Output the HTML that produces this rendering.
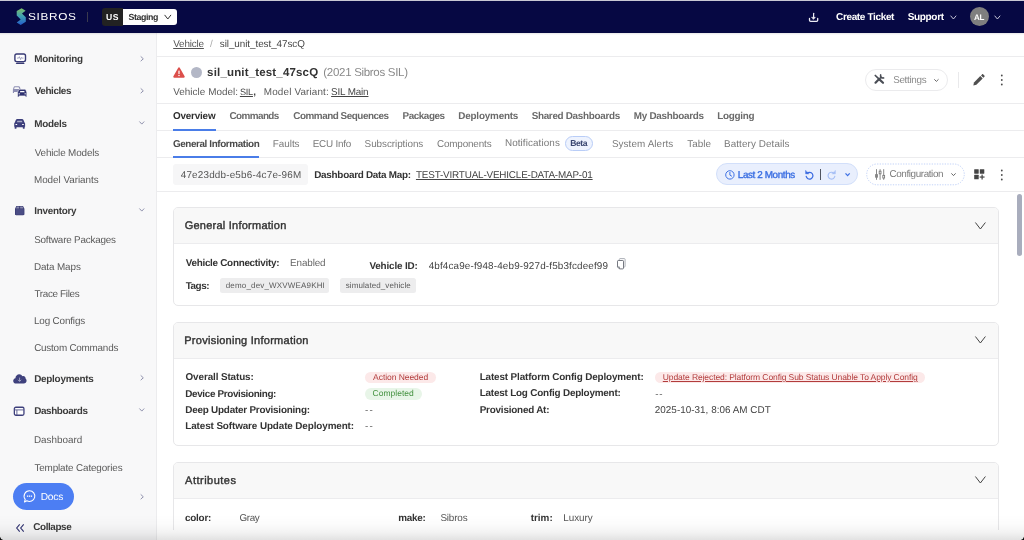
<!DOCTYPE html>
<html lang="en">
<head>
<meta charset="utf-8">
<title>Sibros - Vehicle sil_unit_test_47scQ</title>
<style>
html,body{margin:0;padding:0;}
body{width:1024px;height:540px;overflow:hidden;position:relative;background:#fff;font-family:"Liberation Sans",sans-serif;}
.a{position:absolute;}
.t{position:absolute;white-space:nowrap;line-height:1;text-rendering:geometricPrecision;}
.hl{position:absolute;height:1px;background:#ececee;left:157px;width:867px;}
.card{position:absolute;left:173px;width:824px;border:1px solid #e7e7e9;border-radius:5px;background:#fff;overflow:hidden;box-sizing:content-box;}
.card .hd{position:absolute;left:0;top:0;right:0;height:35px;background:#f8f8f8;border-bottom:1px solid #ececee;}
svg{position:absolute;overflow:visible;}
</style>
</head>
<body>
<!-- top bar -->
<div class="a" style="left:0;top:0;width:1024px;height:1px;background:#c8c8d4;"></div>
<div class="a" style="left:0;top:1px;width:1024px;height:32px;background:#060843;"></div>
<!-- sidebar -->
<div class="a" style="left:0;top:33px;width:156px;height:507px;background:#f8f8f9;border-right:1px solid #ececee;"></div>
<div class="a" style="left:0;top:33px;width:1024px;height:2px;background:linear-gradient(to bottom,rgba(0,0,20,0.10),rgba(0,0,0,0));"></div>
<!-- horizontal rules -->
<div class="hl" style="top:56px;"></div>
<div class="hl" style="top:103px;"></div>
<div class="hl" style="top:130px;"></div>
<div class="hl" style="top:157px;"></div>
<div class="hl" style="top:190.5px;"></div>
<!-- env switch -->
<div class="a" style="left:101.5px;top:8px;width:21.5px;height:17.8px;background:#222222;border-radius:3px 0 0 3px;"></div>
<div class="a" style="left:122.8px;top:8.7px;width:54.4px;height:16.3px;background:#fdfdfd;border-radius:0 3px 3px 0;"></div>
<div class="a" style="left:87px;top:11.5px;width:1px;height:10.5px;background:#3a3a4e;"></div>
<!-- avatar -->
<div class="a" style="left:969.6px;top:7.1px;width:19.3px;height:19.3px;border-radius:50%;background:#7f7f7f;"></div>
<!-- docs button -->
<div class="a" style="left:12.8px;top:482.9px;width:61.1px;height:27.5px;border-radius:14px;background:#4c7ef3;z-index:5;"></div>
<!-- header: status dot, settings pill, divider -->
<div class="a" style="left:190.7px;top:67.1px;width:10.9px;height:10.9px;border-radius:50%;background:#b3b7c6;"></div>
<div class="a" style="left:864.5px;top:69.2px;width:81.5px;height:20.3px;border:1px solid #ebebed;border-radius:11px;background:#fff;box-sizing:content-box;"></div>
<div class="a" style="left:958px;top:71.8px;width:1px;height:16px;background:#e9e9eb;"></div>
<!-- tab underlines -->
<div class="a" style="left:173.2px;top:128.6px;width:42.5px;height:2px;background:#4a7de8;"></div>
<div class="a" style="left:173.2px;top:155.8px;width:86.2px;height:2px;background:#4a7de8;"></div>
<!-- beta badge -->
<div class="a" style="left:565.2px;top:136.3px;width:25.8px;height:12.5px;border:1px solid #b9cdf7;border-radius:8px;background:#eef3fe;box-sizing:content-box;"></div>
<!-- toolbar: id box, time pill, config pill -->
<div class="a" style="left:172.9px;top:163.8px;width:135.5px;height:21.2px;border-radius:3px;background:#f6f6f7;"></div>
<div class="a" style="left:716px;top:163.3px;width:139.8px;height:19.9px;border:1px solid #d2dffa;border-radius:11px;background:#e9effd;box-sizing:content-box;"></div>
<div class="a" style="left:820px;top:169px;width:1px;height:10.7px;background:#50545f;"></div>
<svg style="left:866px;top:163px;" width="100" height="23" viewBox="0 0 100 23"><rect x="0.700" y="1" width="97.600" height="20.800" rx="10.400" fill="#fff" stroke="#c3d3f8" stroke-width="1" stroke-dasharray="1.300 1.300"/></svg>
<!-- scrollbar -->
<div class="a" style="left:1017.2px;top:194.2px;width:4.9px;height:61.4px;border-radius:2.5px;background:#a9adbd;"></div>
<!-- cards -->
<div class="card" style="top:207.3px;height:96.4px;"><div class="hd"></div></div>
<div class="card" style="top:321.8px;height:122.6px;"><div class="hd"></div></div>
<div class="card" style="top:461.8px;height:100px;"><div class="hd"></div></div>
<!-- tag chips -->
<div class="a" style="left:220px;top:278.3px;width:109.1px;height:14.8px;border-radius:2.5px;background:#ededee;"></div>
<div class="a" style="left:340.4px;top:278.3px;width:75.4px;height:14.8px;border-radius:2.5px;background:#ededee;"></div>
<!-- status chips -->
<div class="a" style="left:364.9px;top:371.7px;width:71.2px;height:11.7px;border-radius:6px;background:#fce9e9;"></div>
<div class="a" style="left:364.9px;top:388.1px;width:56.7px;height:11.7px;border-radius:6px;background:#e8f5e8;"></div>
<div class="a" style="left:654.6px;top:371.8px;width:270.4px;height:11.7px;border-radius:6px;background:#fce9e9;"></div>

<!-- logo -->
<svg style="left:0;top:0;" width="100" height="33" viewBox="0 0 100 33">
<defs><linearGradient id="lg" x1="0" y1="0" x2="0" y2="1"><stop offset="0" stop-color="#8fd86a"/><stop offset="0.5" stop-color="#45b4c4"/><stop offset="1" stop-color="#2868dc"/></linearGradient></defs>
<polygon points="21.6,8.2 25.6,10.7 22,13.6 25.8,17.3 25.8,21.8 20.7,24.9 16.7,22.4 20.7,19.6 16.7,15.6 16.7,11.1" fill="url(#lg)" opacity="0.88"/>
</svg>
<!-- download -->
<svg style="left:808px;top:12px;" width="12" height="11" viewBox="0 0 12 11" fill="none" stroke="#ececf4" stroke-width="1.200" stroke-linecap="round" stroke-linejoin="round">
<path d="M5.600 1.300v5"/><path d="M3.900 5.300h3.400L5.600 7.200z" fill="#ececf4" stroke-width="0.600"/><path d="M1.500 6.500v1.800c0 .7.400 1.100 1.100 1.100h6c.7 0 1.100-.4 1.100-1.100V6.500" stroke-width="1.300"/>
</svg>
<!-- topbar chevrons -->
<svg style="left:164px;top:14px;" width="8" height="6" viewBox="0 0 8 6" fill="none" stroke="#333" stroke-width="1"><path d="M0.6 0.9l3.2 4.1 3.2-4.1"/></svg>
<svg style="left:949.5px;top:14.5px;" width="7" height="5" viewBox="0 0 7 5" fill="none" stroke="#d8d8e6" stroke-width="0.9"><path d="M0.6 0.7l2.8 3.3 2.8-3.3"/></svg>
<svg style="left:994.3px;top:14.5px;" width="7" height="5" viewBox="0 0 7 5" fill="none" stroke="#d8d8e6" stroke-width="0.9"><path d="M0.6 0.7l2.8 3.3 2.8-3.3"/></svg>
<!-- sidebar: monitoring -->
<svg style="left:13px;top:52px;" width="15" height="14" viewBox="0 0 15 14" fill="none">
<rect x="1.9" y="2" width="10.6" height="7.6" rx="1.8" fill="#fff" stroke="#383a75" stroke-width="1.4"/>
<path d="M3.6 10.6h7.2l.9 1.5H2.7z" fill="#383a75"/>
<path d="M4 6.1h1.6l.8-1.4 1.2 2.8.9-2 .6.6H10.6" stroke="#6b6d9c" stroke-width="0.6"/>
</svg>
<!-- sidebar: vehicles -->
<svg style="left:12px;top:85px;" width="16" height="13" viewBox="0 0 16 13">
<g fill="#8d8eb3"><path d="M2.6 1.2h4.2c.5 0 .9.3 1.1.8l.9 2.4v3.6H7.4V7H2v1H0.9V4.4l.8-2.4c.1-.5.5-.8.9-.8z"/></g>
<path d="M2.7 2.2h4l.6 1.7H2.1z" fill="#f8f8f9"/>
<g fill="#2f3170"><path d="M8 4.2h4.6c.6 0 1.1.4 1.3.9l.9 2.5v4.500h-1.500v-1.200H7.100v1.200H5.600V7.600l.9-2.5c.2-.5.8-.9 1.5-.9z" stroke="#f8f8f9" stroke-width="0.6"/></g>
<path d="M8.300 5.900h3.900l.500 1.300H7.800z" fill="#fff"/>
<rect x="6.600" y="8.400" width="1.400" height="0.900" fill="#fff"/><rect x="12.500" y="8.400" width="1.400" height="0.900" fill="#fff"/>
</svg>
<!-- sidebar: models -->
<svg style="left:14px;top:119px;" width="12" height="10" viewBox="0 0 12 10">
<path d="M3.3 0.1h4.7c.7 0 1.2.4 1.5 1l1 2.5c.4.2.6.5.6 1v3.1h-.4v1.6c0 .3-.1.4-.4.4h-1.1c-.3 0-.4-.1-.4-.4V8.2H2.5v1.100c0 .3-.1.4-.4.4H1c-.3 0-.4-.1-.4-.4V7.700H.2V4.600c0-.5.200-.8.600-1l1-2.500c.3-.6.800-1 1.500-1z" fill="#3d3f7c"/>
<path d="M3.400 1.700h4.500l.6 1.600H2.800z" fill="#a9aac6"/>
<rect x="1.500" y="5" width="1.700" height="1.100" rx="0.300" fill="#fff"/><rect x="8.100" y="5" width="1.700" height="1.100" rx="0.300" fill="#fff"/>
</svg>
<!-- sidebar: inventory -->
<svg style="left:14.600px;top:206px;" width="10" height="10" viewBox="0 0 10 10">
<path d="M1.400 0h6.600l1.400 2.800v5.300c0 .8-.500 1.200-1.200 1.200H1.200C.5 9.300 0 8.900 0 8.100V2.800z" fill="#34366f"/>
<rect x="0.600" y="3.100" width="8.200" height="5.600" rx="0.500" fill="#4b4d85"/>
<path d="M1.800 0.600h2.500v1.800H1zM5.100 0.600h2.500l.800 1.800H5.100z" fill="#8a8bb0"/>
</svg>
<!-- sidebar: deployments cloud -->
<svg style="left:12.800px;top:373.600px;" width="14" height="10" viewBox="0 0 14 10">
<path d="M3.300 9.600C1.500 9.600 .2 8.400 .2 6.900c0-1.300.9-2.400 2.200-2.700C2.600 2 4.200.3 6.200.3c1.400 0 2.600.8 3.200 2 .3-.1.600-.2.900-.2 1.300 0 2.300 1 2.300 2.300v.2c.6.500 1 1.300 1 2.200 0 1.600-1.300 2.800-2.900 2.800z" fill="#3f417d"/>
<path d="M6.600 3.600v3.600M5 5.800l1.600 1.600 1.600-1.600" stroke="#b9bad2" stroke-width="0.800" fill="none"/>
</svg>
<!-- sidebar: dashboards -->
<svg style="left:12.900px;top:406px;" width="13" height="11" viewBox="0 0 13 11" fill="none">
<rect x="1.350" y="1.250" width="9.600" height="8" rx="1.500" fill="#fff" stroke="#3e407c" stroke-width="1.300"/>
<path d="M1.400 3.900h9.500" stroke="#55578c" stroke-width="0.900"/><path d="M3.900 4v5" stroke="#55578c" stroke-width="0.900"/>
</svg>
<!-- sidebar chevrons right -->
<svg style="left:139.500px;top:55.600px;" width="5" height="6" viewBox="0 0 5 6" fill="none" stroke="#9193ae" stroke-width="1"><path d="M0.700 0.400l2.600 2.400-2.600 2.400"/></svg>
<svg style="left:139.500px;top:88.200px;" width="5" height="6" viewBox="0 0 5 6" fill="none" stroke="#9193ae" stroke-width="1"><path d="M0.700 0.400l2.600 2.400-2.600 2.400"/></svg>
<svg style="left:139.500px;top:375.400px;" width="5" height="6" viewBox="0 0 5 6" fill="none" stroke="#9193ae" stroke-width="1"><path d="M0.700 0.400l2.600 2.400-2.600 2.400"/></svg>
<svg style="left:139.500px;top:494.400px;" width="5" height="6" viewBox="0 0 5 6" fill="none" stroke="#9193ae" stroke-width="1"><path d="M0.700 0.400l2.600 2.400-2.600 2.400"/></svg>
<!-- sidebar chevrons down -->
<svg style="left:138.800px;top:121.400px;" width="6" height="4" viewBox="0 0 6 4" fill="none" stroke="#9193ae" stroke-width="1"><path d="M0.400 0.500l2.400 2.600 2.400-2.600"/></svg>
<svg style="left:138.800px;top:207.900px;" width="6" height="4" viewBox="0 0 6 4" fill="none" stroke="#9193ae" stroke-width="1"><path d="M0.400 0.500l2.400 2.600 2.400-2.600"/></svg>
<svg style="left:138.800px;top:408.300px;" width="6" height="4" viewBox="0 0 6 4" fill="none" stroke="#9193ae" stroke-width="1"><path d="M0.400 0.500l2.400 2.600 2.400-2.600"/></svg>
<!-- docs bubble -->
<svg style="left:22.600px;top:490.100px;z-index:6;" width="14" height="13" viewBox="0 0 14 13" fill="none">
<path d="M6.500 0.800a5.300 5.300 0 1 1-2.600 9.900L1.500 12l.700-2.700A5.300 5.300 0 0 1 6.500.800z" stroke="#fff" stroke-width="1.050" stroke-linejoin="round"/>
<rect x="3.900" y="5.500" width="1.300" height="1.300" fill="#fff"/><rect x="5.850" y="5.500" width="1.300" height="1.300" fill="#fff"/><rect x="7.800" y="5.500" width="1.300" height="1.300" fill="#fff"/>
</svg>
<!-- collapse -->
<svg style="left:15.600px;top:523.800px;" width="9" height="8" viewBox="0 0 9 8" fill="none" stroke="#2f3170" stroke-width="1.100"><path d="M3.700 0.400L0.700 4l3 3.600M7.700 0.400L4.700 4l3 3.600"/></svg>
<!-- warning triangle -->
<svg style="left:173px;top:67px;" width="12" height="11" viewBox="0 0 12 11">
<path d="M6 0.300c.4 0 .7.200.9.600l4.700 8.300c.4.700 0 1.500-.9 1.500H1.300c-.9 0-1.300-.8-.9-1.500L5.100.9c.2-.4.500-.6.900-.6z" fill="#dc4f4b"/>
<rect x="5.400" y="3.400" width="1.200" height="3.700" rx="0.500" fill="#fff"/><circle cx="6" cy="8.600" r="0.750" fill="#fff"/>
</svg>
<!-- tools icon -->
<svg style="left:874px;top:74px;" width="11" height="10" viewBox="0 0 11 10" fill="none" stroke="#4a4e56" stroke-linecap="round">
<path d="M1.300 1.500l3.300 3.200" stroke-width="1.700"/><path d="M5.600 5.600l3.400 3.200" stroke-width="2.200"/><path d="M4.400 4.500l1.400 1.300" stroke-width="1"/>
<path d="M1.500 8.700l3.900-3.900" stroke-width="2.200"/>
<path d="M6.700 0.900a2.300 2.300 0 0 0 2.900 3" stroke-width="1.600"/><path d="M5.300 4.900l1.700-1.700" stroke-width="1.400"/>
</svg>
<svg style="left:934.200px;top:78.600px;" width="5" height="3" viewBox="0 0 5 3" fill="none" stroke="#555" stroke-width="0.900"><path d="M0.300 0.300l2.100 2.100 2.100-2.100"/></svg>
<!-- pencil -->
<svg style="left:972.600px;top:74px;" width="12" height="12" viewBox="0 0 12 12">
<path d="M0.300 11.500l.7-3.100 6.300-6.300 2.400 2.400-6.300 6.300z" fill="#505050"/><path d="M8 1.400l1-1c.4-.4.900-.4 1.300 0l1.100 1.100c.4.400.4.900 0 1.300l-1 1z" fill="#505050"/>
</svg>
<!-- kebabs -->
<svg style="left:1000px;top:74.400px;" width="4" height="12" viewBox="0 0 4 12" fill="#4a4a4a"><circle cx="1.800" cy="1.500" r="0.900"/><circle cx="1.800" cy="6" r="0.900"/><circle cx="1.800" cy="10.500" r="0.900"/></svg>
<svg style="left:1000px;top:168.600px;" width="4" height="12" viewBox="0 0 4 12" fill="#4a4a4a"><circle cx="1.800" cy="1.500" r="0.900"/><circle cx="1.800" cy="6" r="0.900"/><circle cx="1.800" cy="10.500" r="0.900"/></svg>
<!-- time pill icons -->
<svg style="left:724.500px;top:169.500px;z-index:3;" width="10" height="10" viewBox="0 0 10 10" fill="none" stroke="#3f72e4" stroke-width="1"><circle cx="4.900" cy="4.900" r="4.200"/><path d="M4.900 2.400v2.700l1.700 1" stroke-linecap="round"/></svg>
<svg style="left:804.800px;top:169.800px;z-index:3;" width="9" height="10" viewBox="0 0 9 10" fill="none" stroke="#3a6ae0" stroke-width="1.250" stroke-linecap="round"><path d="M2.100 3.300A3.400 3.400 0 1 1 1.200 6.400"/><path d="M0.600 0.700v3.100h3.100z" fill="#3a6ae0" stroke-width="0.500" stroke-linejoin="round"/></svg>
<svg style="left:827.200px;top:169.800px;z-index:3;" width="9" height="10" viewBox="0 0 9 10" fill="none" stroke="#a5bef5" stroke-width="1.150" stroke-linecap="round"><path d="M6.900 3.300A3.400 3.400 0 1 0 7.800 6.400"/><path d="M8.400 0.700v3.100H5.300z" fill="#a5bef5" stroke-width="0.500" stroke-linejoin="round"/></svg>
<svg style="left:844.800px;top:172.900px;z-index:3;" width="6" height="4" viewBox="0 0 6 4" fill="none" stroke="#3f72e4" stroke-width="1.300"><path d="M0.500 0.400l2.100 2.200 2.100-2.200"/></svg>
<!-- sliders icon -->
<svg style="left:875.400px;top:168.900px;z-index:3;" width="11" height="11" viewBox="0 0 11 11" fill="none" stroke="#7a7a7a" stroke-width="0.900">
<path d="M1.500 0.200v10.600M5.100 0.200v10.600M8.700 0.200v10.600"/><rect x="0.600" y="5.600" width="1.800" height="2.600" fill="#fff"/><rect x="4.200" y="2.200" width="1.800" height="2.600" fill="#fff"/><rect x="7.800" y="6.400" width="1.800" height="2.600" fill="#fff"/>
</svg>
<svg style="left:951px;top:173.200px;z-index:3;" width="6" height="4" viewBox="0 0 6 4" fill="none" stroke="#555" stroke-width="0.900"><path d="M0.400 0.400l2.100 2.200 2.100-2.200"/></svg>
<!-- grid plus -->
<svg style="left:974px;top:169.300px;" width="11" height="11" viewBox="0 0 11 11" fill="#444">
<rect x="0.200" y="0.200" width="4.500" height="4.500" rx="0.400"/><rect x="5.800" y="0.200" width="4.500" height="4.500" rx="0.400"/><rect x="0.200" y="5.800" width="4.500" height="4.500" rx="0.400"/>
<rect x="7.500" y="5.600" width="1.200" height="4.900"/><rect x="5.650" y="7.450" width="4.900" height="1.200"/>
</svg>
<!-- copy icon -->
<svg style="left:617px;top:258.200px;z-index:3;" width="9" height="12" viewBox="0 0 9 12" fill="none" stroke-width="0.900">
<path d="M2.300 2.500V1.300c0-.4.300-.700.700-.700h4.400c.4 0 .7.300.7.700v7c0 .4-.3.700-.7.700H6.700" stroke="#a3a7af"/><path d="M1.200 2.500h4.600c.4 0 .7.300.7.700v7c0 .4-.3.700-.7.700H2.500L.5 8.900V3.200c0-.4.300-.7.700-.7z" fill="#fff" stroke="#666a73"/><path d="M.6 8.900h1.800v1.900" stroke="#666a73" stroke-width="0.700"/>
</svg>
<!-- card chevrons -->
<svg style="left:975.300px;top:221.800px;z-index:3;" width="11" height="8" viewBox="0 0 11 8" fill="none" stroke="#444" stroke-width="1"><path d="M0.400 0.500l5 6.500 5-6.500"/></svg>
<svg style="left:975.300px;top:336.300px;z-index:3;" width="11" height="8" viewBox="0 0 11 8" fill="none" stroke="#444" stroke-width="1"><path d="M0.400 0.500l5 6.500 5-6.500"/></svg>
<svg style="left:975.300px;top:476.300px;z-index:3;" width="11" height="8" viewBox="0 0 11 8" fill="none" stroke="#444" stroke-width="1"><path d="M0.400 0.500l5 6.500 5-6.500"/></svg>

<div class="a" style="left:0;top:0;width:1024px;height:540px;will-change:transform;z-index:7;">
<span class="t" style="left:106.1px;top:13px;font-size:8.6px;font-weight:700;letter-spacing:0.5px;color:#ffffff;">US</span>
<span class="t" style="left:128.55px;top:13px;font-size:8.8px;font-weight:700;letter-spacing:-0.399px;color:#303030;">Staging</span>
<span class="t" style="left:836.05px;top:13px;font-size:10.0px;font-weight:700;letter-spacing:-0.354px;color:#ffffff;">Create Ticket</span>
<span class="t" style="left:907.65px;top:13px;font-size:10.0px;font-weight:700;letter-spacing:-0.316px;color:#ffffff;">Support</span>
<span class="t" style="left:973.95px;top:14px;font-size:8.0px;font-weight:700;letter-spacing:-0.25px;color:#ffffff;">AL</span>
<span class="t" style="left:34.2px;top:55px;font-size:9.9px;font-weight:700;letter-spacing:-0.232px;color:#3b3b3b;">Monitoring</span>
<span class="t" style="left:34.7px;top:87px;font-size:9.9px;font-weight:700;letter-spacing:-0.4px;color:#3b3b3b;">Vehicles</span>
<span class="t" style="left:34.2px;top:120px;font-size:9.9px;font-weight:700;letter-spacing:-0.25px;color:#3b3b3b;">Models</span>
<span class="t" style="left:34.7px;top:149px;font-size:9.9px;font-weight:400;letter-spacing:-0.146px;color:#5a5a5a;">Vehicle Models</span>
<span class="t" style="left:33.95px;top:176px;font-size:9.9px;font-weight:400;letter-spacing:-0.031px;color:#5a5a5a;">Model Variants</span>
<span class="t" style="left:34.2px;top:207px;font-size:9.9px;font-weight:700;letter-spacing:-0.257px;color:#3b3b3b;">Inventory</span>
<span class="t" style="left:34.2px;top:236px;font-size:9.9px;font-weight:400;letter-spacing:-0.206px;color:#5a5a5a;">Software Packages</span>
<span class="t" style="left:33.95px;top:263px;font-size:9.9px;font-weight:400;letter-spacing:-0.107px;color:#5a5a5a;">Data Maps</span>
<span class="t" style="left:34.45px;top:290px;font-size:9.9px;font-weight:400;letter-spacing:-0.325px;color:#5a5a5a;">Trace Files</span>
<span class="t" style="left:33.95px;top:317px;font-size:9.9px;font-weight:400;letter-spacing:-0.145px;color:#5a5a5a;">Log Configs</span>
<span class="t" style="left:34.2px;top:344px;font-size:9.9px;font-weight:400;letter-spacing:-0.221px;color:#5a5a5a;">Custom Commands</span>
<span class="t" style="left:34.2px;top:375px;font-size:9.9px;font-weight:700;letter-spacing:-0.245px;color:#3b3b3b;">Deployments</span>
<span class="t" style="left:34.2px;top:407px;font-size:9.9px;font-weight:700;letter-spacing:-0.371px;color:#3b3b3b;">Dashboards</span>
<span class="t" style="left:33.95px;top:436px;font-size:9.9px;font-weight:400;letter-spacing:-0.013px;color:#5a5a5a;">Dashboard</span>
<span class="t" style="left:34.45px;top:464px;font-size:9.9px;font-weight:400;letter-spacing:-0.135px;color:#5a5a5a;">Template Categories</span>
<span class="t" style="left:40.65px;top:493px;font-size:10.2px;font-weight:400;letter-spacing:-0.151px;color:#ffffff;z-index:6;">Docs</span>
<span class="t" style="left:33.35px;top:523px;font-size:9.9px;font-weight:700;letter-spacing:-0.407px;color:#3b3b3b;">Collapse</span>
<span class="t" style="left:173.2px;top:40px;font-size:9.9px;font-weight:400;letter-spacing:-0.167px;color:#555555;text-decoration:underline;text-underline-offset:1px;">Vehicle</span>
<span class="t" style="left:209.9px;top:40px;font-size:9.9px;font-weight:400;letter-spacing:0px;color:#aaaaaa;">/</span>
<span class="t" style="left:219.75px;top:40px;font-size:9.9px;font-weight:400;letter-spacing:-0.059px;color:#444444;">sil_unit_test_47scQ</span>
<span class="t" style="left:207.1px;top:68px;font-size:11.5px;font-weight:700;letter-spacing:0.167px;color:#333333;">sil_unit_test_47scQ</span>
<span class="t" style="left:323.35px;top:68px;font-size:11.5px;font-weight:400;letter-spacing:-0.304px;color:#888888;">(2021 Sibros SIL)</span>
<span class="t" style="left:173.2px;top:88px;font-size:9.9px;font-weight:400;letter-spacing:0.05px;color:#5a5a5a;">Vehicle Model:</span>
<span class="t" style="left:239.9px;top:88px;font-size:9.2px;font-weight:400;letter-spacing:-0.25px;color:#444444;text-decoration:underline;text-underline-offset:1px;">SIL</span>
<span class="t" style="left:253.35px;top:88px;font-size:9.9px;font-weight:700;letter-spacing:0px;color:#444444;">,</span>
<span class="t" style="left:263.85px;top:88px;font-size:9.9px;font-weight:400;letter-spacing:0.149px;color:#5a5a5a;">Model Variant:</span>
<span class="t" style="left:331.1px;top:88px;font-size:9.9px;font-weight:400;letter-spacing:-0.157px;color:#444444;text-decoration:underline;text-underline-offset:1px;">SIL Main</span>
<span class="t" style="left:893.2px;top:76px;font-size:9.9px;font-weight:400;letter-spacing:-0.321px;color:#8a8a8a;">Settings</span>
<span class="t" style="left:172.95px;top:112px;font-size:9.9px;font-weight:700;letter-spacing:-0.179px;color:#2f2f2f;">Overview</span>
<span class="t" style="left:229.5px;top:112px;font-size:9.9px;font-weight:700;letter-spacing:-0.564px;color:#6a6a6a;">Commands</span>
<span class="t" style="left:293.25px;top:112px;font-size:9.9px;font-weight:700;letter-spacing:-0.459px;color:#6a6a6a;">Command Sequences</span>
<span class="t" style="left:402.5px;top:112px;font-size:9.9px;font-weight:700;letter-spacing:-0.429px;color:#6a6a6a;">Packages</span>
<span class="t" style="left:458.3px;top:112px;font-size:9.9px;font-weight:700;letter-spacing:-0.195px;color:#6a6a6a;">Deployments</span>
<span class="t" style="left:531.65px;top:112px;font-size:9.9px;font-weight:700;letter-spacing:-0.297px;color:#6a6a6a;">Shared Dashboards</span>
<span class="t" style="left:633.8px;top:112px;font-size:9.9px;font-weight:700;letter-spacing:-0.283px;color:#6a6a6a;">My Dashboards</span>
<span class="t" style="left:717.2px;top:112px;font-size:9.9px;font-weight:700;letter-spacing:-0.267px;color:#6a6a6a;">Logging</span>
<span class="t" style="left:172.95px;top:140px;font-size:9.9px;font-weight:700;letter-spacing:-0.392px;color:#4a4a4a;">General Information</span>
<span class="t" style="left:272.75px;top:140px;font-size:9.9px;font-weight:400;letter-spacing:-0.02px;color:#7a7a7a;">Faults</span>
<span class="t" style="left:312.75px;top:140px;font-size:9.9px;font-weight:400;letter-spacing:-0.214px;color:#7a7a7a;">ECU Info</span>
<span class="t" style="left:364.6px;top:140px;font-size:9.9px;font-weight:400;letter-spacing:-0.05px;color:#7a7a7a;">Subscriptions</span>
<span class="t" style="left:436.9px;top:140px;font-size:9.9px;font-weight:400;letter-spacing:-0.144px;color:#7a7a7a;">Components</span>
<span class="t" style="left:504.95px;top:139px;font-size:9.9px;font-weight:400;letter-spacing:0.092px;color:#7a7a7a;">Notifications</span>
<span class="t" style="left:570.2px;top:139px;font-size:8.6px;font-weight:700;letter-spacing:-0.433px;color:#3a4670;">Beta</span>
<span class="t" style="left:611.9px;top:140px;font-size:9.9px;font-weight:400;letter-spacing:0.088px;color:#7a7a7a;">System Alerts</span>
<span class="t" style="left:687.35px;top:140px;font-size:9.9px;font-weight:400;letter-spacing:-0.013px;color:#7a7a7a;">Table</span>
<span class="t" style="left:724.0px;top:140px;font-size:9.9px;font-weight:400;letter-spacing:0.092px;color:#7a7a7a;">Battery Details</span>
<span class="t" style="left:180.75px;top:171px;font-size:9.9px;font-weight:400;letter-spacing:0.19px;color:#555555;">47e23ddb-e5b6-4c7e-96M</span>
<span class="t" style="left:314.25px;top:171px;font-size:9.9px;font-weight:700;letter-spacing:-0.26px;color:#333333;">Dashboard Data Map:</span>
<span class="t" style="left:415.95px;top:171px;font-size:9.9px;font-weight:400;letter-spacing:-0.172px;color:#444444;text-decoration:underline;text-underline-offset:1px;">TEST-VIRTUAL-VEHICLE-DATA-MAP-01</span>
<span class="t" style="left:737.8px;top:171px;font-size:9.9px;font-weight:400;letter-spacing:-0.387px;color:#3a6ee2;-webkit-text-stroke:0.35px #3a6ee2;">Last 2 Months</span>
<span class="t" style="left:889.5px;top:170px;font-size:9.9px;font-weight:400;letter-spacing:-0.396px;color:#7a7a7a;">Configuration</span>
<span class="t" style="left:184.65px;top:221px;font-size:11.0px;font-weight:400;letter-spacing:0.245px;color:#333333;-webkit-text-stroke:0.4px #333333;">General Information</span>
<span class="t" style="left:185.7px;top:259px;font-size:9.9px;font-weight:700;letter-spacing:-0.275px;color:#333333;">Vehicle Connectivity:</span>
<span class="t" style="left:290.05px;top:259px;font-size:9.9px;font-weight:400;letter-spacing:-0.116px;color:#666666;">Enabled</span>
<span class="t" style="left:369.4px;top:262px;font-size:9.9px;font-weight:700;letter-spacing:-0.15px;color:#333333;">Vehicle ID:</span>
<span class="t" style="left:428.65px;top:262px;font-size:9.9px;font-weight:400;letter-spacing:0.152px;color:#444444;">4bf4ca9e-f948-4eb9-927d-f5b3fcdeef99</span>
<span class="t" style="left:185.7px;top:282px;font-size:9.9px;font-weight:700;letter-spacing:-0.438px;color:#333333;">Tags:</span>
<span class="t" style="left:225.75px;top:282px;font-size:8.0px;font-weight:400;letter-spacing:0.167px;color:#5a5a5a;">demo_dev_WXVWEA9KHI</span>
<span class="t" style="left:345.75px;top:282px;font-size:8.0px;font-weight:400;letter-spacing:0.09px;color:#5a5a5a;">simulated_vehicle</span>
<span class="t" style="left:184.25px;top:336px;font-size:11.0px;font-weight:400;letter-spacing:0.27px;color:#333333;-webkit-text-stroke:0.4px #333333;">Provisioning Information</span>
<span class="t" style="left:185.55px;top:373px;font-size:9.9px;font-weight:700;letter-spacing:-0.107px;color:#333333;">Overall Status:</span>
<span class="t" style="left:185.3px;top:390px;font-size:9.9px;font-weight:700;letter-spacing:-0.347px;color:#333333;">Device Provisioning:</span>
<span class="t" style="left:185.3px;top:406px;font-size:9.9px;font-weight:700;letter-spacing:-0.214px;color:#333333;">Deep Updater Provisioning:</span>
<span class="t" style="left:185.3px;top:422px;font-size:9.9px;font-weight:700;letter-spacing:-0.106px;color:#333333;">Latest Software Update Deployment:</span>
<span class="t" style="left:373.1px;top:373px;font-size:8.5px;font-weight:400;letter-spacing:-0.062px;color:#b23c3c;">Action Needed</span>
<span class="t" style="left:372.6px;top:389px;font-size:8.5px;font-weight:400;letter-spacing:0.0px;color:#43913f;">Completed</span>
<span class="t" style="left:364.9px;top:406px;font-size:9.9px;font-weight:400;letter-spacing:1.25px;color:#666666;">--</span>
<span class="t" style="left:364.9px;top:422px;font-size:9.9px;font-weight:400;letter-spacing:1.25px;color:#666666;">--</span>
<span class="t" style="left:479.7px;top:373px;font-size:9.9px;font-weight:700;letter-spacing:-0.134px;color:#333333;">Latest Platform Config Deployment:</span>
<span class="t" style="left:479.7px;top:389px;font-size:9.9px;font-weight:700;letter-spacing:-0.19px;color:#333333;">Latest Log Config Deployment:</span>
<span class="t" style="left:479.7px;top:406px;font-size:9.9px;font-weight:700;letter-spacing:-0.2px;color:#333333;">Provisioned At:</span>
<span class="t" style="left:662.8px;top:373px;font-size:8.5px;font-weight:400;letter-spacing:-0.096px;color:#b23c3c;text-decoration:underline;text-underline-offset:1px;">Update Rejected: Platform Config Sub Status Unable To Apply Config</span>
<span class="t" style="left:655.3px;top:390px;font-size:9.9px;font-weight:400;letter-spacing:0.75px;color:#666666;">--</span>
<span class="t" style="left:654.8px;top:406px;font-size:9.9px;font-weight:400;letter-spacing:0.029px;color:#444444;">2025-10-31, 8:06 AM CDT</span>
<span class="t" style="left:185.05px;top:476px;font-size:11.0px;font-weight:400;letter-spacing:0.495px;color:#333333;-webkit-text-stroke:0.4px #333333;">Attributes</span>
<span class="t" style="left:185.05px;top:514px;font-size:9.9px;font-weight:700;letter-spacing:-0.24px;color:#333333;">color:</span>
<span class="t" style="left:239.4px;top:514px;font-size:9.9px;font-weight:400;letter-spacing:-0.349px;color:#555555;">Gray</span>
<span class="t" style="left:398.25px;top:514px;font-size:9.9px;font-weight:700;letter-spacing:-0.25px;color:#333333;">make:</span>
<span class="t" style="left:440.4px;top:514px;font-size:9.9px;font-weight:400;letter-spacing:-0.15px;color:#555555;">Sibros</span>
<span class="t" style="left:530.7px;top:514px;font-size:9.9px;font-weight:700;letter-spacing:0.012px;color:#333333;">trim:</span>
<span class="t" style="left:563.25px;top:514px;font-size:9.9px;font-weight:400;letter-spacing:-0.02px;color:#555555;">Luxury</span>
<span class="t" style="left:28.3px;top:13.0px;font-size:10.2px;font-weight:400;letter-spacing:0.55px;color:#fff;transform:scale(1.16,1);transform-origin:0 0;">SIBROS</span>

</div>
<!-- bottom cover + shadow overlay -->
<div class="a" style="left:157px;top:530px;width:867px;height:10px;background:#fff;z-index:8;"></div>
<div class="a" style="left:0;top:515px;width:1024px;height:25px;z-index:20;background:linear-gradient(to bottom,rgba(0,0,0,0) 0%,rgba(0,0,0,0.015) 40%,rgba(0,0,0,0.05) 70%,rgba(0,0,0,0.115) 100%);"></div>
<svg style="left:0;top:535px;z-index:21;" width="5" height="5" viewBox="0 0 5 5"><path d="M0 1.800Q0.600 4.400 3.200 5H0z" fill="#0a0a0a"/></svg>
<svg style="left:1019px;top:535px;z-index:21;" width="5" height="5" viewBox="0 0 5 5"><path d="M5 1.800Q4.400 4.400 1.800 5H5z" fill="#0a0a0a"/></svg>
</body>
</html>
